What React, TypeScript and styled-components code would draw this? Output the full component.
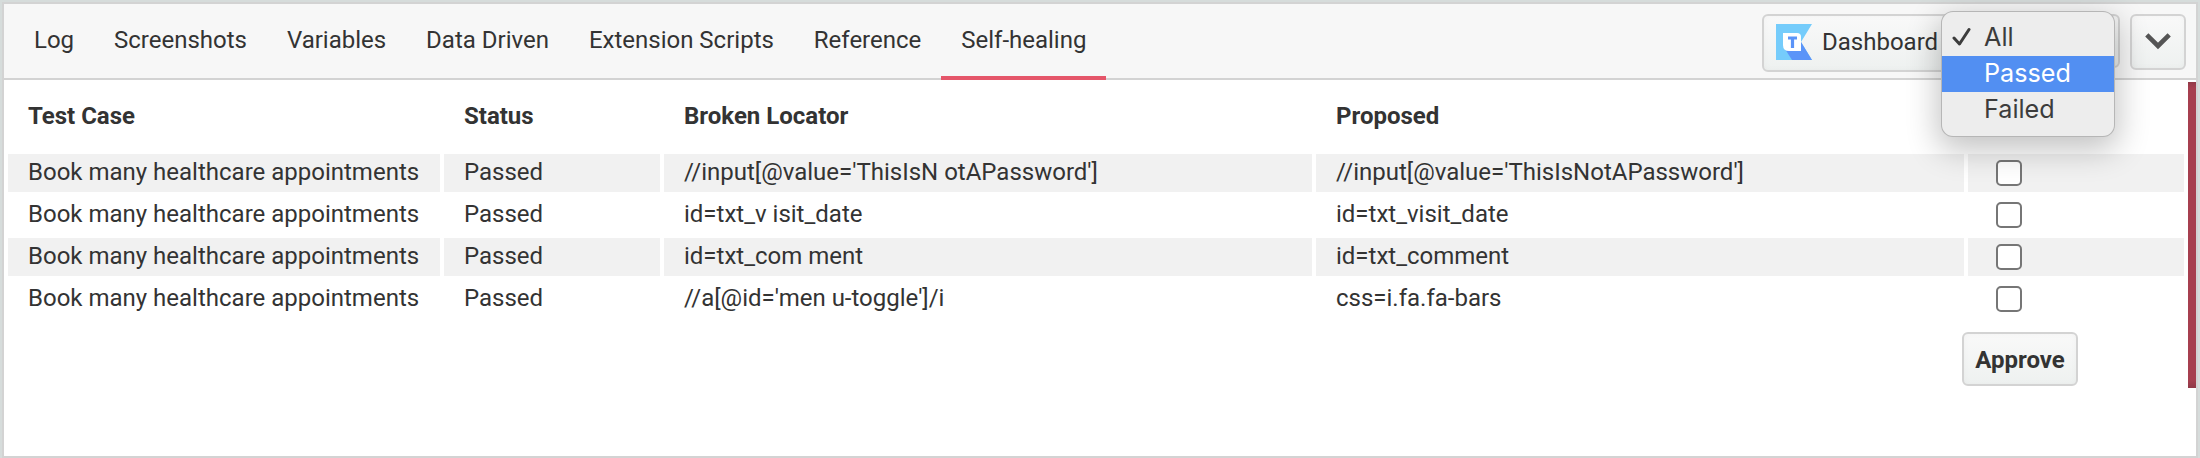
import React from "react";
import styled, { createGlobalStyle, css } from "styled-components";

const GlobalStyle = createGlobalStyle`
  * { box-sizing: border-box; }
  body { margin: 0; background: #fff; }
`;

const Window = styled.div`
  width: 2200px;
  height: 458px;
  padding: 2px 2px 0;
  background: #d6dcdb;
  color: #333;
  font: 24px/38px Roboto, sans-serif;
`;

const Panel = styled.main`
  height: 456px;
  border: 2px solid #d3d3d3;
  background: #fff;
`;

const Toolbar = styled.header`
  position: relative;
  display: flex;
  justify-content: space-between;
  height: 76px;
  padding: 0 10px 0 10px;
  background: #f7f7f7;
  border-bottom: 2px solid #d3d3d3;
`;

const Tabs = styled.nav`
  display: flex;
`;

const Tab = styled.a<{ $active?: boolean }>`
  height: 76px;
  padding: 0 19.98px;
  line-height: 72px;
  white-space: nowrap;
  border-bottom: 4px solid ${(p) => (p.$active ? "#e5566a" : "transparent")};
`;

const Tools = styled.div`
  display: flex;
  align-items: flex-start;
  gap: 10px;
  padding-top: 10px;
`;

const button = css`
  border: 2px solid #d3d3d3;
  border-radius: 6px;
  background: linear-gradient(#f9f9f9, #eef1f0);
  box-shadow: inset 0 0 6px rgba(0, 0, 0, 0.03);
  color: #333;
  font-family: Roboto, sans-serif;
  font-size: 24px;
`;

const DashboardButton = styled.button`
  ${button}
  display: flex;
  align-items: center;
  gap: 10px;
  width: 200px;
  height: 58px;
  padding: 0 12px 2px;
`;

const StatusSelect = styled.div`
  ${button}
  width: 148px;
  height: 54px;
`;

const ToggleButton = styled.button`
  ${button}
  display: flex;
  align-items: center;
  justify-content: center;
  width: 56px;
  height: 56px;
  padding: 0;
`;

const Menu = styled.ul`
  position: absolute;
  z-index: 2;
  top: 8px;
  right: 82px;
  width: 172px;
  height: 124px;
  margin: 0;
  padding: 8px 0;
  list-style: none;
  border-radius: 11px;
  background: #ededed;
  box-shadow: 0 0 0 1px #b6b6b6, 0 10px 32px 4px rgba(0, 0, 0, 0.24);
  font: 25.2px/34px Inter, sans-serif;
`;

const MenuItem = styled.li<{ $selected?: boolean }>`
  display: grid;
  grid-template-columns: 32px 1fr;
  align-items: start;
  height: 36px;
  padding-left: 10px;
  color: ${(p) => (p.$selected ? "#fff" : "#3c3c3c")};
  background: ${(p) => (p.$selected ? "#528ff2" : "transparent")};

  & > svg {
    margin-top: 7px;
  }
`;

const MenuLabel = styled.span`
  grid-column: 2;
`;

const Body = styled.div`
  display: flex;
  justify-content: space-between;
  align-items: flex-start;
`;

const Table = styled.div`
  display: grid;
  gap: 4px;
  padding: 4px 4px 0;
`;

const Row = styled.div<{ $head?: boolean; $striped?: boolean }>`
  display: grid;
  grid-template-columns: 432px 216px 648px 648px 216px;
  gap: 4px;
  height: ${(p) => (p.$head ? 66 : 38)}px;
  line-height: ${(p) => (p.$head ? 64 : 37)}px;
  font-weight: ${(p) => (p.$head ? 700 : 400)};
  & > div {
    background: ${(p) => (p.$striped ? "#f1f1f1" : "transparent")};
  }
`;

const Cell = styled.div`
  padding: 0 20px;
  white-space: nowrap;
`;

const CheckCell = styled.div`
  display: flex;
  padding: 6px 28px;
`;

const Checkbox = styled.input`
  appearance: none;
  width: 26px;
  height: 26px;
  margin: 0;
  border: 2px solid #767676;
  border-radius: 5px;
  background: #fff;
`;

const Actions = styled.div`
  display: flex;
  justify-content: flex-end;
  padding: 14px 110px 0 0;
`;

const ApproveButton = styled.button`
  ${button}
  width: 116px;
  height: 54px;
  padding: 2px 0 0;
  font-weight: 700;
`;

const Scrollbar = styled.div`
  width: 8px;
  height: 306px;
  margin-top: 2px;
  background: linear-gradient(#923a48, #a63f4f 6px, #a63f4f 298px, #8f3947);
`;

const Logo = () => (
  <svg width="36" height="36" viewBox="0 0 36 36">
    <path d="M0 0H36L25 18L36 36H0Z" fill="#75ccfb" />
    <path d="M9 25L25 18L36 36H16Z" fill="#5b94f8" />
    <path d="M7 9H21Q25 9 25 13V27H13Q7 27 7 21Z" fill="#fff" />
    <path d="M12 14H21M16.5 14V24" fill="none" stroke="#5b94f8" strokeWidth="3.2" />
  </svg>
);

const tabs = ["Log", "Screenshots", "Variables", "Data Driven", "Extension Scripts", "Reference", "Self-healing"];

const rows = [
  ["//input[@value='ThisIsN otAPassword']", "//input[@value='ThisIsNotAPassword']"],
  ["id=txt_v isit_date", "id=txt_visit_date"],
  ["id=txt_com ment", "id=txt_comment"],
  ["//a[@id='men u-toggle']/i", "css=i.fa.fa-bars"],
];

export default function App() {
  return (
    <Window>
      <GlobalStyle />
      <Panel>
        <Toolbar>
          <Tabs>
            {tabs.map((t) => (
              <Tab key={t} $active={t === "Self-healing"}>{t}</Tab>
            ))}
          </Tabs>
          <Tools>
            <DashboardButton><Logo />Dashboard</DashboardButton>
            <StatusSelect />
            <ToggleButton aria-label="Collapse">
              <svg width="26" height="18" viewBox="0 0 26 18">
                <path d="M1.8 1.8L13 13L24.2 1.8" fill="none" stroke="#555" strokeWidth="4.6" />
              </svg>
            </ToggleButton>
          </Tools>
          <Menu>
            <MenuItem>
              <svg width="20" height="20" viewBox="0 0 20 20">
                <path d="M2 11L7.5 17L17 2.5" fill="none" stroke="#3c3c3c" strokeWidth="3" strokeLinecap="round" strokeLinejoin="round" />
              </svg>
              <MenuLabel>All</MenuLabel>
            </MenuItem>
            <MenuItem $selected><MenuLabel>Passed</MenuLabel></MenuItem>
            <MenuItem><MenuLabel>Failed</MenuLabel></MenuItem>
          </Menu>
        </Toolbar>
        <Body>
          <div>
            <Table>
              <Row $head>
                <Cell>Test Case</Cell>
                <Cell>Status</Cell>
                <Cell>Broken Locator</Cell>
                <Cell>Proposed</Cell>
              </Row>
              {rows.map(([broken, proposed], i) => (
                <Row key={broken} $striped={i % 2 === 0}>
                  <Cell>Book many healthcare appointments</Cell>
                  <Cell>Passed</Cell>
                  <Cell>{broken}</Cell>
                  <Cell>{proposed}</Cell>
                  <CheckCell><Checkbox type="checkbox" /></CheckCell>
                </Row>
              ))}
            </Table>
            <Actions><ApproveButton>Approve</ApproveButton></Actions>
          </div>
          <Scrollbar />
        </Body>
      </Panel>
    </Window>
  );
}
